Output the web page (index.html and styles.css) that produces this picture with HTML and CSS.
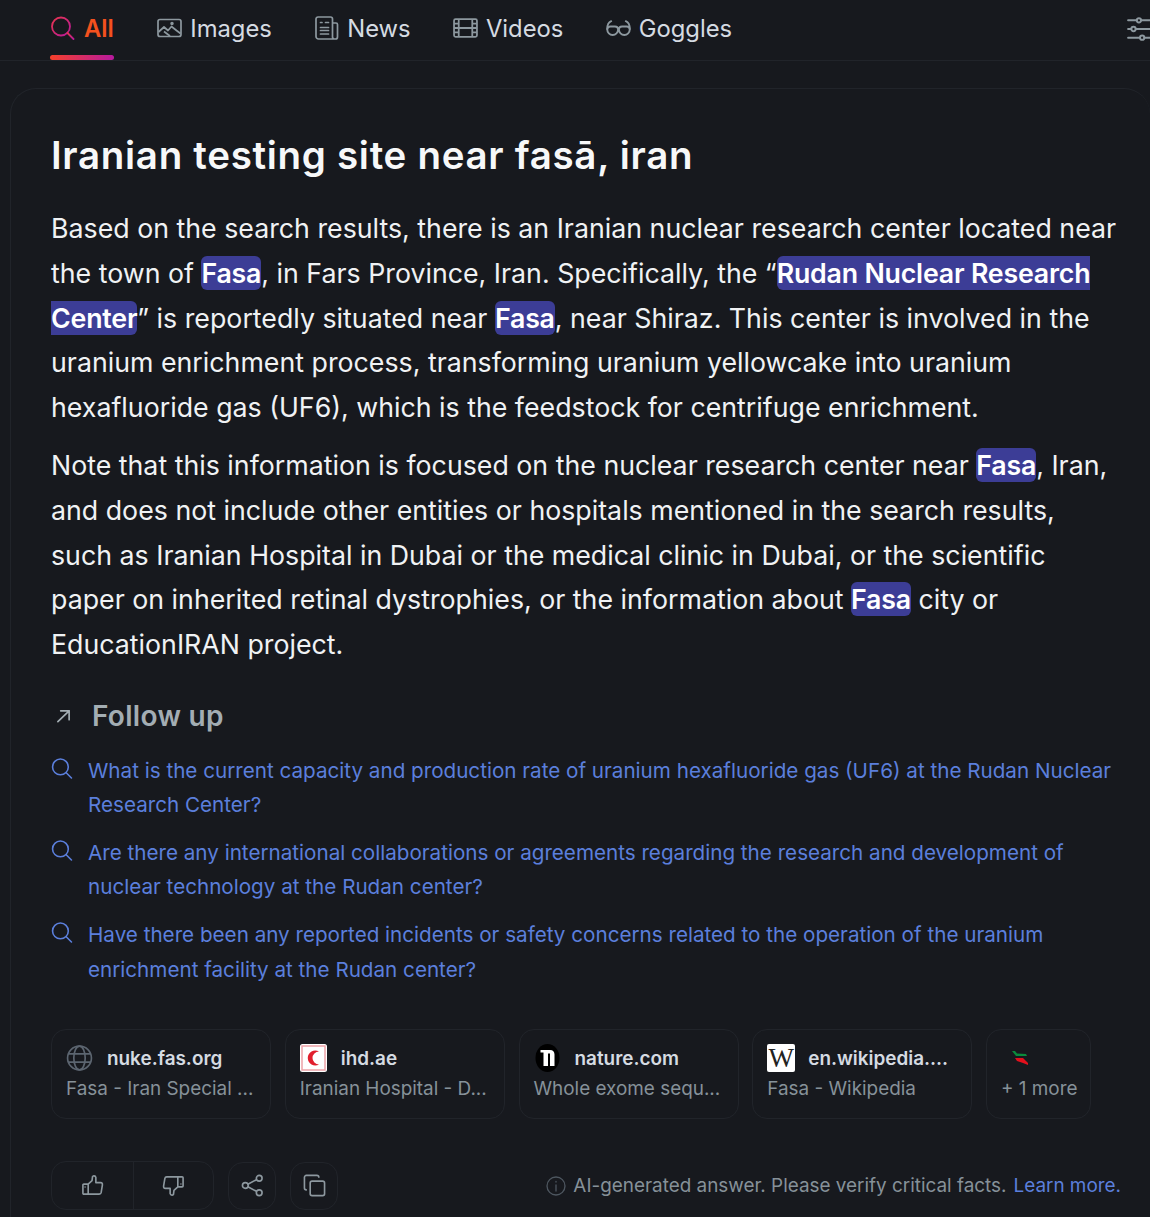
FILE: index.html
```html
<!DOCTYPE html>
<html lang="en">
<head>
<meta charset="utf-8">
<title>Iranian testing site near fasā, iran</title>
<link rel="stylesheet" href="styles.css">
</head>
<body>
<svg class="defs" width="0" height="0" aria-hidden="true">
  <defs>
    <linearGradient id="grad-search" x1="0" y1="0" x2="1" y2="1">
      <stop offset="0" stop-color="#e8344f"/>
      <stop offset="1" stop-color="#b81a9a"/>
    </linearGradient>
  </defs>
</svg>
<nav class="tabs">
  <a class="tab tab-active">
    <svg class="tab-icon" viewBox="0 0 24 24" fill="none" stroke="url(#grad-search)" stroke-width="1.8" stroke-linecap="round"><circle cx="10.5" cy="10.5" r="9"/><path d="M17 17l6 6"/></svg>
    <span>All</span>
  </a>
  <a class="tab">
    <svg class="tab-icon" viewBox="0 0 25 20" fill="none" stroke="currentColor" stroke-width="1.7" stroke-linejoin="round"><rect x="1" y="1.5" width="23" height="17" rx="2"/><path d="M1.500 14l5.500-5 4 3.500 3.500-4 5 4 4 3"/><path d="M7 13.500l6 4.500"/><circle cx="15" cy="5.500" r=".9"/></svg>
    <span>Images</span>
  </a>
  <a class="tab">
    <svg class="tab-icon" viewBox="0 0 24 24" fill="none" stroke="currentColor" stroke-width="1.7" stroke-linecap="round" stroke-linejoin="round"><path d="M18 7h3.500a1.500 1.500 0 0 1 1.500 1.500V21a2 2 0 0 1-2 2H4a2.500 2.500 0 0 1-2.500-2.500V3A2 2 0 0 1 3.500 1h12.500a2 2 0 0 1 2 2v18a2 2 0 0 0 2 2"/><path d="M6 6.500h1.500M11 6.500h3M6 11.500h8M6 14.500h8M6 18h8"/></svg>
    <span>News</span>
  </a>
  <a class="tab">
    <svg class="tab-icon" viewBox="0 0 24 20" fill="none" stroke="currentColor" stroke-width="1.700" stroke-linejoin="round"><rect x="1" y="1.500" width="22" height="17" rx="1.500"/><path d="M5.500 1.500v17M18.500 1.500v17M5.500 10h13M1 5.700h4.500M1 10h4.500M1 14.300h4.500M18.500 5.700H23M18.500 10H23M18.500 14.300H23"/></svg>
    <span>Videos</span>
  </a>
  <a class="tab">
    <svg class="tab-icon" viewBox="0 0 24 16" fill="none" stroke="currentColor" stroke-width="1.800" stroke-linecap="round"><path d="M1.200 9c0-4 1-6.500 3.800-7.500M22.800 9c0-4-1-6.500-3.800-7.500"/><path d="M1.200 9.500a5.200 5.200 0 0 0 10.400 0c0-2-1.500-3-3-3H4.200c-1.500 0-3 1-3 3zM12.400 9.500a5.200 5.200 0 0 0 10.400 0c0-2-1.500-3-3-3h-4.400c-1.500 0-3 1-3 3z"/></svg>
    <span>Goggles</span>
  </a>
  <svg class="filters" viewBox="0 0 24 24" fill="none" stroke="currentColor" stroke-width="1.800" stroke-linecap="round"><path d="M1 4h8M13 4h11M1 12h3M8 12h16M1 20h11M16 20h8"/><circle cx="11" cy="4" r="2"/><circle cx="6" cy="12" r="2"/><circle cx="14" cy="20" r="2"/></svg>
</nav>
<main class="card">
  <h1 class="title">Iranian testing site near fasā, iran</h1>
  <p class="para">Based on the search results, there is an Iranian nuclear research center located near the town of <mark>Fasa</mark>, in Fars Province, Iran. Specifically, the “<mark>Rudan Nuclear Research Center</mark>” is reportedly situated near <mark>Fasa</mark>, near Shiraz. This center is involved in the uranium enrichment process, transforming uranium yellowcake into uranium hexafluoride gas (UF6), which is the feedstock for centrifuge enrichment.</p>
  <p class="para para-second">Note that this information is focused on the nuclear research center near <mark>Fasa</mark>, Iran, and does not include other entities or hospitals mentioned in the search results, such as Iranian Hospital in Dubai or the medical clinic in Dubai, or the scientific paper on inherited retinal dystrophies, or the information about <mark>Fasa</mark> city or EducationIRAN project.</p>

  <h2 class="follow-head">
    <svg class="follow-arrow" viewBox="0 0 16 16" fill="none" stroke="currentColor" stroke-width="1.800" stroke-linecap="round" stroke-linejoin="round"><path d="M2 14.500L14 3M5 3h9v9.500"/></svg>
    <span>Follow up</span>
  </h2>
  <ul class="follow-list">
    <li class="follow-item">
      <svg class="follow-icon" viewBox="0 0 20 20" fill="none" stroke="currentColor" stroke-width="1.500" stroke-linecap="round"><circle cx="8.500" cy="8.500" r="7.500"/><path d="M14 14l5 5"/></svg>
      <a>What is the current capacity and production rate of uranium hexafluoride gas (UF6) at the Rudan Nuclear Research Center?</a>
    </li>
    <li class="follow-item">
      <svg class="follow-icon" viewBox="0 0 20 20" fill="none" stroke="currentColor" stroke-width="1.500" stroke-linecap="round"><circle cx="8.500" cy="8.500" r="7.500"/><path d="M14 14l5 5"/></svg>
      <a>Are there any international collaborations or agreements regarding the research and development of nuclear technology at the Rudan center?</a>
    </li>
    <li class="follow-item">
      <svg class="follow-icon" viewBox="0 0 20 20" fill="none" stroke="currentColor" stroke-width="1.500" stroke-linecap="round"><circle cx="8.500" cy="8.500" r="7.500"/><path d="M14 14l5 5"/></svg>
      <a>Have there been any reported incidents or safety concerns related to the operation of the uranium enrichment facility at the Rudan center?</a>
    </li>
  </ul>

  <div class="sources">
    <a class="source">
      <div class="source-top">
        <svg class="fav" viewBox="0 0 26 26" fill="none" stroke="#5c6570" stroke-width="1.600"><circle cx="13" cy="13" r="11.500"/><ellipse cx="13" cy="13" rx="5.500" ry="11.500"/><path d="M2 9h22M2 17h22"/></svg>
        <span class="domain">nuke.fas.org</span>
      </div>
      <div class="source-sub">Fasa - Iran Special ...</div>
    </a>
    <a class="source">
      <div class="source-top">
        <svg class="fav" viewBox="0 0 27 28"><rect width="27" height="28" rx="2.500" fill="#fff"/><rect x="2" y="2" width="23" height="24" fill="none" stroke="#eda3a8" stroke-width="1.500"/><path d="M19 7.500a7.500 7.500 0 1 0 0 13a6 6 0 1 1 0-13z" fill="#e11f2d"/></svg>
        <span class="domain">ihd.ae</span>
      </div>
      <div class="source-sub">Iranian Hospital - D...</div>
    </a>
    <a class="source">
      <div class="source-top">
        <svg class="fav" viewBox="0 0 26 28"><ellipse cx="13" cy="14" rx="12" ry="14" fill="#000"/><path d="M6 6h9.500c3 0 4.500 2 4.500 4.500V22h-4.500V9.500h-2V22H9V8.500H6z" fill="#fff"/></svg>
        <span class="domain">nature.com</span>
      </div>
      <div class="source-sub">Whole exome sequ...</div>
    </a>
    <a class="source">
      <div class="source-top">
        <span class="fav fav-wiki">W</span>
        <span class="domain">en.wikipedia....</span>
      </div>
      <div class="source-sub">Fasa - Wikipedia</div>
    </a>
    <a class="source source-more">
      <div class="source-top">
        <svg class="fav-flag" viewBox="0 0 18 16"><path d="M1 1l3 0 2 2.500 9 .5 1 2H5z" fill="#0a8a3c"/><path d="M4 8h8l3 3 2 2v2l-5-2-6-2z" fill="#e3101c"/></svg>
      </div>
      <div class="source-sub">+ 1 more</div>
    </a>
  </div>

  <footer class="actions">
    <div class="btn-group">
      <button class="btn btn-wide" aria-label="Thumbs up">
        <svg class="btn-icon" viewBox="0 0 24 24" fill="none" stroke="currentColor" stroke-width="1.700" stroke-linejoin="round"><path d="M7.500 21H3a1 1 0 0 1-1-1v-8.500a1 1 0 0 1 1-1h4.500zM7.500 10.500l4-3.500.5-4c0-1.500 3-1.500 3.500.5v5.500h5c1.500 0 2 1 1.800 2.500l-1.300 8c-.2 1-1 1.500-2 1.500H7.500"/><path d="M4.300 13v1"/></svg>
      </button>
      <button class="btn btn-wide btn-divided" aria-label="Thumbs down">
        <svg class="btn-icon" viewBox="0 0 24 24" fill="none" stroke="currentColor" stroke-width="1.700" stroke-linejoin="round"><path d="M16.500 3H21a1 1 0 0 1 1 1v8.500a1 1 0 0 1-1 1h-4.500zM16.500 13.500l-4 3.500-.5 4c0 1.500-3 1.500-3.500-.5V15h-5c-1.500 0-2-1-1.800-2.500l1.300-8C3.200 3.500 4 3 5 3h11.500"/><path d="M19.700 10v1"/></svg>
      </button>
    </div>
    <button class="btn btn-single" aria-label="Share">
      <svg class="btn-icon" viewBox="0 0 24 24" fill="none" stroke="currentColor" stroke-width="1.700"><circle cx="19" cy="4.500" r="3"/><circle cx="4.500" cy="12" r="3"/><circle cx="19" cy="19.500" r="3"/><path d="M7.200 10.600l9-4.700M7.200 13.400l9 4.700"/></svg>
    </button>
    <button class="btn btn-single" aria-label="Copy">
      <svg class="btn-icon" viewBox="0 0 24 24" fill="none" stroke="currentColor" stroke-width="1.700" stroke-linejoin="round"><rect x="7.500" y="7.500" width="15" height="15" rx="2"/><path d="M4 16.500H3.500A2 2 0 0 1 1.500 14.500V3.500a2 2 0 0 1 2-2h11a2 2 0 0 1 2 2V4"/></svg>
    </button>
    <div class="disclaimer">
      <svg class="info" viewBox="0 0 20 20" fill="none" stroke="currentColor" stroke-width="1.300" stroke-linecap="round"><circle cx="10" cy="10" r="9"/><path d="M10 9v6M10 5.500v.5"/></svg>
      <span>AI-generated answer. Please verify critical facts.</span>
      <a class="learn">Learn more.</a>
    </div>
  </footer>
</main>
</body>
</html>
```
FILE: styles.css
```css
* { box-sizing: border-box; }
html, body { margin: 0; padding: 0; }
body {
  height: 1217px;
  overflow: hidden;
  background: #17191e;
  color: #f0f2f4;
  font-family: Inter, "Liberation Sans", sans-serif;
}
.defs { position: absolute; }

.tabs {
  display: flex;
  height: 61px;
  padding-left: 50px;
  gap: 42.300px;
  border-bottom: 1px solid #21242a;
  color: #8d989f;
  position: relative;
}
.tab {
  display: flex;
  align-items: center;
  gap: 8px;
  height: 60px;
  font-size: 23.800px;
  color: #d5dbe2;
  position: relative;
  padding-bottom: 4px;
}
.tab-icon { height: 24px; width: 25px; color: #8d989f; flex: none; }
.tab-active { color: #f4511e; font-weight: 600; gap: 9px; margin-right: 1.200px; }
.tab-active::after {
  content: "";
  position: absolute;
  left: 0;
  right: 0;
  bottom: 0;
  height: 5px;
  border-radius: 3px;
  background: linear-gradient(90deg, #f5402a, #b81a9f);
}
.filters {
  position: absolute;
  left: 1127px;
  top: 16px;
  width: 26px;
  height: 26px;
  color: #8d989f;
}

.card {
  margin: 27px 0 0 10px;
  padding: 41px 29px 0 40px;
  height: 1150px;
  border: 1px solid #21242a;
  border-right: 0;
  border-bottom: 0;
  border-radius: 26px 26px 0 0;
}
.title {
  margin: 0 0 26.300px;
  font-size: 38.500px;
  line-height: 50px;
  font-weight: 600;
  letter-spacing: 0.7px;
  color: #f7f8f9;
}
.para {
  margin: 0;
  font-size: 26.750px;
  line-height: 44.700px;
  color: #f0f2f4;
}
.para-second { margin-top: 13.500px; }
mark {
  background: #3c3d96;
  color: #fff;
  font-weight: 600;
  letter-spacing: -0.2px;
  border-radius: 6px;
  padding: 1px 0;
}

.follow-head {
  display: flex;
  align-items: center;
  gap: 21px;
  margin: 26.700px 0 0;
  padding-left: 5px;
  font-size: 28px;
  line-height: 44px;
  font-weight: 600;
  letter-spacing: 0.3px;
  color: #a3adb3;
}
.follow-arrow { width: 15px; height: 15px; color: #a3adb3; flex: none; }
.follow-list { list-style: none; margin: 16px 0 0; padding: 0; }
.follow-item {
  display: flex;
  gap: 15px;
  font-size: 20.650px;
  line-height: 34.300px;
  color: #5b7fdc;
  margin-bottom: 13.900px;
}
.follow-icon { width: 22px; height: 21px; flex: none; margin-top: 4px; }

.sources { display: flex; gap: 13.750px; margin-top: 42px; }
.source {
  width: 220px;
  height: 90px;
  padding: 14px 14px 0;
  border: 1px solid #21242a;
  border-radius: 15px;
  flex: none;
}
.source-more { width: 105px; }
.source-top { display: flex; align-items: center; gap: 14px; height: 28px; }
.fav { width: 27px; height: 28px; flex: none; }
.fav-wiki {
  display: block;
  width: 28px;
  margin-right: -1px;
  background: #fff;
  color: #222;
  border-radius: 2px;
  font-family: "Liberation Serif", serif;
  font-size: 27px;
  line-height: 28px;
  text-align: center;
}
.fav-flag { width: 18px; height: 16px; margin-left: 10px; }
.domain { font-size: 18.900px; font-weight: 600; color: #d5dbe2; white-space: nowrap; }
.source-sub { margin-top: 3px; font-size: 18.900px; line-height: 28px; color: #869199; white-space: nowrap; }

.actions { display: flex; align-items: center; margin-top: 42px; gap: 14px; }
.btn-group { display: flex; border: 1px solid #21242a; border-radius: 15px; height: 49px; }
.btn {
  background: none;
  border: 0;
  padding: 0;
  color: #8d989f;
  display: flex;
  align-items: center;
  justify-content: center;
}
.btn-wide { width: 80.500px; height: 47px; }
.btn-divided { border-left: 1px solid #21242a; }
.btn-single { width: 48px; height: 48px; border: 1px solid #21242a; border-radius: 15px; }
.btn-icon { width: 23px; height: 23px; }
.disclaimer {
  display: flex;
  align-items: center;
  gap: 7px;
  margin-left: auto;
  font-size: 18.900px;
  color: #869199;
  white-space: nowrap;
}
.info { width: 20px; height: 20px; color: #4e5760; flex: none; }
.learn { color: #5b7fdc; }
```
